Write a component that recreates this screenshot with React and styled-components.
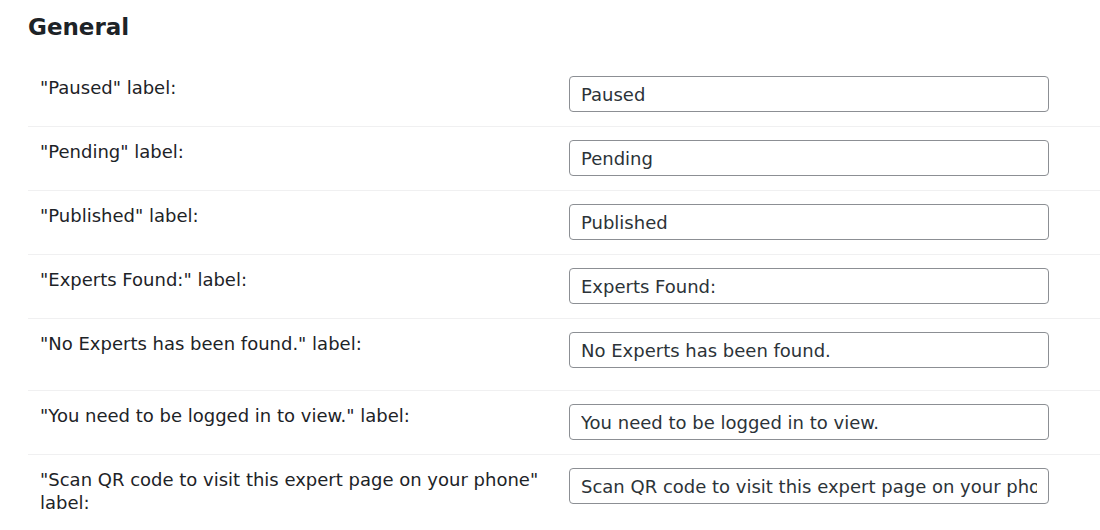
import styled, { createGlobalStyle } from "styled-components";

const GlobalStyle = createGlobalStyle`
  html, body {
    margin: 0;
    padding: 0;
    background: #ffffff;
    overflow: hidden;
  }
  body {
    font-family: "DejaVu Sans", Verdana, sans-serif;
    color: #1d2327;
  }
`;

const fields = [
  { label: '"Paused" label:', value: "Paused" },
  { label: '"Pending" label:', value: "Pending" },
  { label: '"Published" label:', value: "Published" },
  { label: '"Experts Found:" label:', value: "Experts Found:" },
  {
    label: '"No Experts has been found." label:',
    value: "No Experts has been found.",
    tall: true,
  },
  {
    label: '"You need to be logged in to view." label:',
    value: "You need to be logged in to view.",
  },
  {
    label: '"Scan QR code to visit this expert page on your phone" label:',
    value: "Scan QR code to visit this expert page on your phone",
    last: true,
  },
];

export default function App() {
  return (
    <>
      <GlobalStyle />
      <Page>
        <Heading>General</Heading>
        <Table>
          {fields.map((f) => (
            <Row key={f.value} $tall={f.tall} $last={f.last}>
              <Label>{f.label}</Label>
              <Field>
                <TextInput type="text" defaultValue={f.value} readOnly />
              </Field>
            </Row>
          ))}
        </Table>
      </Page>
    </>
  );
}

const Page = styled.div`
  padding: 0 0 0 28px;
  width: 1072px;
`;

const Heading = styled.h2`
  margin: 0;
  padding: 12px 0 0;
  height: 51px;
  font-size: 23px;
  font-weight: bold;
  line-height: 30px;
  color: #1d2327;
`;

const Table = styled.div`
  display: flex;
  flex-direction: column;
`;

const Row = styled.div`
  display: grid;
  grid-template-columns: 541px 480px;
  align-items: start;
  padding: 13px 0 ${(p) => (p.$tall ? "22px" : "14px")};
  border-bottom: ${(p) => (p.$last ? "none" : "1px solid #f0f0f1")};
`;

const Label = styled.div`
  padding: 0 16px 0 12px;
  font-size: 18px;
  line-height: 23px;
  color: #1d2327;
`;

const Field = styled.div`
  display: flex;
`;

const TextInput = styled.input`
  box-sizing: border-box;
  width: 480px;
  height: 36px;
  padding: 0 11px;
  border: 1px solid #8c8f94;
  border-radius: 4px;
  background: #ffffff;
  font-family: "DejaVu Sans", Verdana, sans-serif;
  font-size: 18px;
  color: #2c3338;
  outline: none;
`;
